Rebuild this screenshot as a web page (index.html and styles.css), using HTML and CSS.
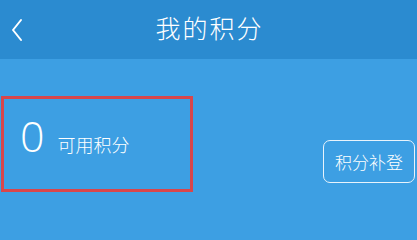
FILE: index.html
```html
<!DOCTYPE html>
<html lang="zh">
<head>
<meta charset="utf-8">
<link rel="stylesheet" href="styles.css">
</head>
<body>
<header class="topbar">
  <a class="back" aria-label="返回">
    <svg width="14" height="24" viewBox="0 0 14 24"><path d="M11 2 L3 12 L11 22" fill="none" stroke="#fff" stroke-width="2" stroke-linecap="round" stroke-linejoin="round"/></svg>
  </a>
  <h1 class="title">我的积分</h1>
  <span class="spacer"></span>
</header>
<main class="content">
  <div class="points-box">
    <span class="points-num">0</span>
    <span class="points-label">可用积分</span>
  </div>
  <button class="supplement-btn">积分补登</button>
</main>
</body>
</html>
```
FILE: styles.css
```css
html, body {
  margin: 0;
  padding: 0;
  width: 417px;
  height: 235px;
  overflow: hidden;
  background: #3d9fe3;
  font-family: "Noto Sans CJK SC", "Noto Sans", sans-serif;
  color: #fff;
}
.topbar {
  height: 59px;
  background: #2b8bd0;
  display: grid;
  grid-template-columns: 1fr auto 1fr;
  align-items: center;
}
.back {
  display: flex;
  align-items: center;
  padding-left: 10px;
  padding-top: 1px;
}
.title {
  margin: 0;
  font-size: 25px;
  font-weight: 300;
  letter-spacing: 2px;
  line-height: 1;
  padding-bottom: 4px;
  padding-left: 2px;
}
.content {
  display: flex;
  justify-content: space-between;
  align-items: flex-start;
  padding: 37px 2px 0 1px;
}
.points-box {
  box-sizing: border-box;
  width: 192px;
  height: 96px;
  border: 3px solid #d9464b;
  display: flex;
  align-items: baseline;
  padding: 15px 0 0 16px;
}
.points-num {
  font-family: "Open Sans", "Noto Sans", sans-serif;
  font-weight: 300;
  font-size: 43px;
  line-height: 1;
}
.points-label {
  font-size: 18px;
  font-weight: 300;
  margin-left: 13px;
  line-height: 1;
}
.supplement-btn {
  margin-top: 44px;
  width: 92px;
  height: 43px;
  border: 1.5px solid #e8f3fc;
  border-radius: 7px;
  background: transparent;
  color: #fff;
  font-family: "Noto Sans CJK SC", "Noto Sans", sans-serif;
  font-size: 17px;
  font-weight: 300;
  padding: 0;
  line-height: 1;
}
```
